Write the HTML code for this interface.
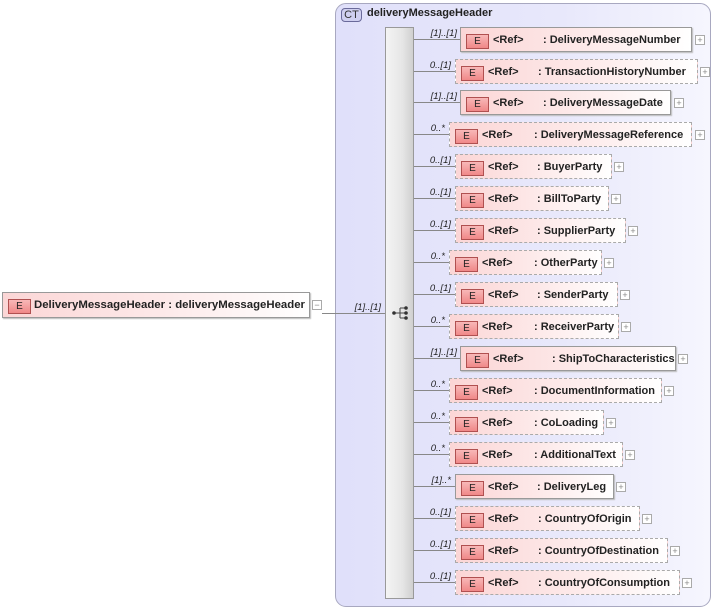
<!DOCTYPE html>
<html><head><meta charset="utf-8"><style>
body{margin:0;width:715px;height:612px;background:#fff;position:relative;overflow:hidden;font-family:"Liberation Sans",Arial,sans-serif;}
.a{position:absolute;}
.ct{left:335px;top:3px;width:376px;height:604px;border:1px solid #a8a8c0;border-radius:11px;background:linear-gradient(90deg,#e0e0fa 0%,#e8e8fb 60%,#f6f6fe 100%);box-sizing:border-box;}
.ctl{left:341px;top:8px;width:19px;height:12px;border:1px solid #6a6a9a;border-radius:4px;background:#d0d0f0;font-size:11px;line-height:12px;text-align:center;color:#333;}
.seq{left:385px;top:27px;width:29px;height:572px;background:linear-gradient(90deg,#f4f4f4,#e6e6e6 60%,#d0d0d0);border:1px solid #999;box-sizing:border-box;}
.box{position:absolute;height:25px;box-sizing:border-box;background:linear-gradient(90deg,#fbd6d6,#fde8e8 50%,#fff);font-size:11px;font-weight:bold;color:#222;}
.s{border:1px solid #999;box-shadow:1px 1px 1px #bbb;}
.d{border:1px dashed #aaa;}
.e{position:absolute;left:5px;top:6px;width:21px;height:13px;border:1px solid #b05050;background:linear-gradient(#f8b8b8,#f08888);font-size:10px;font-weight:normal;text-align:center;line-height:13px;color:#222;}
.r{position:absolute;left:32px;top:6px;line-height:13px;}
.n{position:absolute;top:6px;line-height:13px;white-space:nowrap;}
.p{position:absolute;width:8px;height:8px;border:1px solid #aaa;background:#fff;font-size:9px;line-height:8px;text-align:center;color:#888;}
.ln{position:absolute;height:1px;background:#888;}
.c{position:absolute;font-size:9.5px;font-style:italic;color:#222;text-align:right;width:40px;}
</style></head><body>
<div class="a ct"></div>
<div class="a ctl">CT</div>
<div class="a" style="left:367px;top:7px;font-size:11px;font-weight:bold;color:#222;">deliveryMessageHeader</div>
<div class="a seq"></div>
<svg class="a" style="left:391px;top:305px" width="20" height="16"><line x1="2" y1="8" x2="9" y2="8" stroke="#444"/><line x1="9" y1="3" x2="9" y2="13" stroke="#444"/><line x1="9" y1="3" x2="15" y2="3" stroke="#444"/><line x1="9" y1="8" x2="15" y2="8" stroke="#444"/><line x1="9" y1="13" x2="15" y2="13" stroke="#444"/><circle cx="3" cy="8" r="1.8" fill="#333"/><circle cx="15" cy="3" r="1.8" fill="#333"/><circle cx="15" cy="8" r="1.8" fill="#333"/><circle cx="15" cy="13" r="1.8" fill="#333"/></svg>

<div class="box s" style="left:2px;top:292px;width:308px;height:26px;"><div class="e" style="top:6px">E</div><div class="n" style="left:31px;top:6px;font-size:11.4px">DeliveryMessageHeader : deliveryMessageHeader</div></div>
<div class="p" style="left:312px;top:300px">−</div>
<div class="ln" style="left:322px;top:313px;width:63px"></div>
<div class="c" style="left:341px;top:302px">[1]..[1]</div>

<div class="ln" style="left:414px;top:39px;width:46px"></div><div class="c" style="left:417px;top:28px">[1]..[1]</div>
<div class="box s" style="left:460px;top:27px;width:232px"><div class="e">E</div><div class="r">&lt;Ref&gt;</div><div class="n" style="left:82px">: DeliveryMessageNumber</div></div><div class="p" style="left:695px;top:35px">+</div>

<div class="ln" style="left:414px;top:71px;width:41px"></div><div class="c" style="left:411px;top:60px">0..[1]</div>
<div class="box d" style="left:455px;top:59px;width:243px"><div class="e">E</div><div class="r">&lt;Ref&gt;</div><div class="n" style="left:82px">: TransactionHistoryNumber</div></div><div class="p" style="left:700px;top:67px">+</div>

<div class="ln" style="left:414px;top:102px;width:46px"></div><div class="c" style="left:417px;top:91px">[1]..[1]</div>
<div class="box s" style="left:460px;top:90px;width:211px"><div class="e">E</div><div class="r">&lt;Ref&gt;</div><div class="n" style="left:82px">: DeliveryMessageDate</div></div><div class="p" style="left:674px;top:98px">+</div>

<div class="ln" style="left:414px;top:134px;width:35px"></div><div class="c" style="left:405px;top:123px">0..*</div>
<div class="box d" style="left:449px;top:122px;width:243px"><div class="e">E</div><div class="r">&lt;Ref&gt;</div><div class="n" style="left:84px">: DeliveryMessageReference</div></div><div class="p" style="left:695px;top:130px">+</div>

<div class="ln" style="left:414px;top:166px;width:41px"></div><div class="c" style="left:411px;top:155px">0..[1]</div>
<div class="box d" style="left:455px;top:154px;width:157px"><div class="e">E</div><div class="r">&lt;Ref&gt;</div><div class="n" style="left:81px">: BuyerParty</div></div><div class="p" style="left:614px;top:162px">+</div>

<div class="ln" style="left:414px;top:198px;width:41px"></div><div class="c" style="left:411px;top:187px">0..[1]</div>
<div class="box d" style="left:455px;top:186px;width:154px"><div class="e">E</div><div class="r">&lt;Ref&gt;</div><div class="n" style="left:81px">: BillToParty</div></div><div class="p" style="left:611px;top:194px">+</div>

<div class="ln" style="left:414px;top:230px;width:41px"></div><div class="c" style="left:411px;top:219px">0..[1]</div>
<div class="box d" style="left:455px;top:218px;width:171px"><div class="e">E</div><div class="r">&lt;Ref&gt;</div><div class="n" style="left:81px">: SupplierParty</div></div><div class="p" style="left:628px;top:226px">+</div>

<div class="ln" style="left:414px;top:262px;width:35px"></div><div class="c" style="left:405px;top:251px">0..*</div>
<div class="box d" style="left:449px;top:250px;width:153px"><div class="e">E</div><div class="r">&lt;Ref&gt;</div><div class="n" style="left:84px">: OtherParty</div></div><div class="p" style="left:604px;top:258px">+</div>

<div class="ln" style="left:414px;top:294px;width:41px"></div><div class="c" style="left:411px;top:283px">0..[1]</div>
<div class="box d" style="left:455px;top:282px;width:163px"><div class="e">E</div><div class="r">&lt;Ref&gt;</div><div class="n" style="left:81px">: SenderParty</div></div><div class="p" style="left:620px;top:290px">+</div>

<div class="ln" style="left:414px;top:326px;width:35px"></div><div class="c" style="left:405px;top:315px">0..*</div>
<div class="box d" style="left:449px;top:314px;width:170px"><div class="e">E</div><div class="r">&lt;Ref&gt;</div><div class="n" style="left:84px">: ReceiverParty</div></div><div class="p" style="left:621px;top:322px">+</div>

<div class="ln" style="left:414px;top:358px;width:46px"></div><div class="c" style="left:417px;top:347px">[1]..[1]</div>
<div class="box s" style="left:460px;top:346px;width:216px"><div class="e">E</div><div class="r">&lt;Ref&gt;</div><div class="n" style="left:91px">: ShipToCharacteristics</div></div><div class="p" style="left:678px;top:354px">+</div>

<div class="ln" style="left:414px;top:390px;width:35px"></div><div class="c" style="left:405px;top:379px">0..*</div>
<div class="box d" style="left:449px;top:378px;width:213px"><div class="e">E</div><div class="r">&lt;Ref&gt;</div><div class="n" style="left:84px">: DocumentInformation</div></div><div class="p" style="left:664px;top:386px">+</div>

<div class="ln" style="left:414px;top:422px;width:35px"></div><div class="c" style="left:405px;top:411px">0..*</div>
<div class="box d" style="left:449px;top:410px;width:155px"><div class="e">E</div><div class="r">&lt;Ref&gt;</div><div class="n" style="left:84px">: CoLoading</div></div><div class="p" style="left:606px;top:418px">+</div>

<div class="ln" style="left:414px;top:454px;width:35px"></div><div class="c" style="left:405px;top:443px">0..*</div>
<div class="box d" style="left:449px;top:442px;width:174px"><div class="e">E</div><div class="r">&lt;Ref&gt;</div><div class="n" style="left:84px">: AdditionalText</div></div><div class="p" style="left:625px;top:450px">+</div>

<div class="ln" style="left:414px;top:486px;width:41px"></div><div class="c" style="left:411px;top:475px">[1]..*</div>
<div class="box s" style="left:455px;top:474px;width:159px"><div class="e">E</div><div class="r">&lt;Ref&gt;</div><div class="n" style="left:81px">: DeliveryLeg</div></div><div class="p" style="left:616px;top:482px">+</div>

<div class="ln" style="left:414px;top:518px;width:41px"></div><div class="c" style="left:411px;top:507px">0..[1]</div>
<div class="box d" style="left:455px;top:506px;width:185px"><div class="e">E</div><div class="r">&lt;Ref&gt;</div><div class="n" style="left:82px">: CountryOfOrigin</div></div><div class="p" style="left:642px;top:514px">+</div>

<div class="ln" style="left:414px;top:550px;width:41px"></div><div class="c" style="left:411px;top:539px">0..[1]</div>
<div class="box d" style="left:455px;top:538px;width:213px"><div class="e">E</div><div class="r">&lt;Ref&gt;</div><div class="n" style="left:82px">: CountryOfDestination</div></div><div class="p" style="left:670px;top:546px">+</div>

<div class="ln" style="left:414px;top:582px;width:41px"></div><div class="c" style="left:411px;top:571px">0..[1]</div>
<div class="box d" style="left:455px;top:570px;width:225px"><div class="e">E</div><div class="r">&lt;Ref&gt;</div><div class="n" style="left:82px">: CountryOfConsumption</div></div><div class="p" style="left:682px;top:578px">+</div>
</body></html>
